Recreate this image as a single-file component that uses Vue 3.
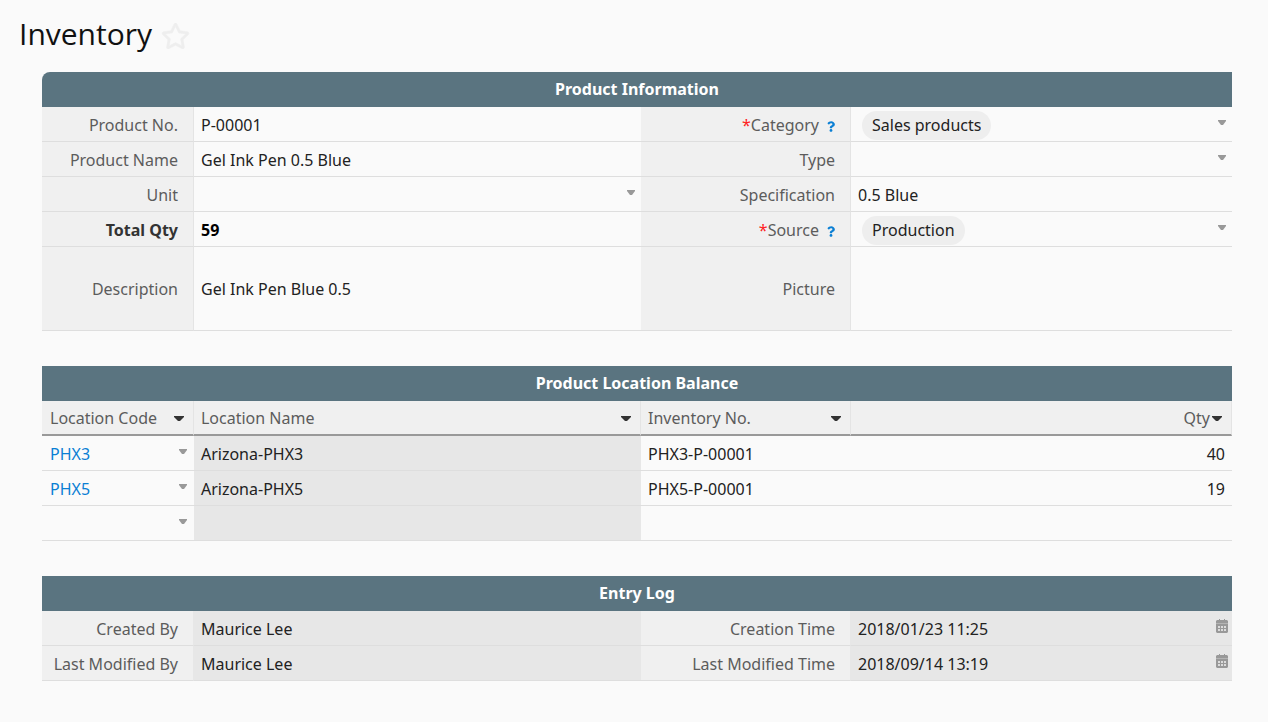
<script setup>
import { reactive } from 'vue'

const record = reactive({
  no: 'P-00001',
  name: 'Gel Ink Pen 0.5 Blue',
  unit: '',
  total: '59',
  description: 'Gel Ink Pen Blue 0.5',
  category: 'Sales products',
  type: '',
  specification: '0.5 Blue',
  source: 'Production',
})

const fields = [
  { key: 'no', label: 'Product No.', kind: 'text' },
  { key: 'category', label: 'Category', kind: 'select', required: true, pill: true },
  { key: 'name', label: 'Product Name', kind: 'text' },
  { key: 'type', label: 'Type', kind: 'select' },
  { key: 'unit', label: 'Unit', kind: 'select' },
  { key: 'specification', label: 'Specification', kind: 'text' },
  { key: 'total', label: 'Total Qty', kind: 'text', strong: true },
  { key: 'source', label: 'Source', kind: 'select', required: true, pill: true },
  { key: 'description', label: 'Description', kind: 'text', tall: true },
  { key: 'picture', label: 'Picture', kind: 'picture', tall: true },
]

const columns = ['Location Code', 'Location Name', 'Inventory No.', 'Qty']
const balances = [
  { code: 'PHX3', name: 'Arizona-PHX3', inventory: 'PHX3-P-00001', qty: 40 },
  { code: 'PHX5', name: 'Arizona-PHX5', inventory: 'PHX5-P-00001', qty: 19 },
  { code: '', name: '', inventory: '', qty: '' },
]

const log = [
  { id: 'created-by', label: 'Created By', value: 'Maurice Lee' },
  { id: 'creation-time', label: 'Creation Time', value: '2018/01/23 11:25', date: true },
  { id: 'modified-by', label: 'Last Modified By', value: 'Maurice Lee' },
  { id: 'modified-time', label: 'Last Modified Time', value: '2018/09/14 13:19', date: true },
]
</script>

<template>
  <main class="page">
    <header class="title">
      <h1>Inventory</h1>
      <button class="star" type="button" aria-label="Add to favorites">
        <svg width="29" height="26" viewBox="0 0 576 512" aria-hidden="true"><path fill="currentColor" stroke="currentColor" stroke-width="10" d="M528.1 171.5L382 150.2 316.7 17.8c-11.7-23.6-45.6-23.9-57.4 0L194 150.2 47.9 171.5c-26.2 3.8-36.7 36.1-17.7 54.6l105.7 103-25 145.5c-4.5 26.3 23.2 46 46.4 33.7L288 439.6l130.7 68.7c23.2 12.2 50.9-7.4 46.4-33.7l-25-145.5 105.7-103c19-18.5 8.5-50.8-17.7-54.6zM388.6 312.3l23.7 138.4L288 385.4l-124.3 65.3 23.7-138.4-100.6-98 139-20.2 62.2-126 62.2 126 139 20.2-100.6 98z" /></svg>
      </button>
    </header>

    <section class="block first">
      <h2>Product Information</h2>
      <div class="fields">
        <template v-for="f in fields" :key="f.key">
          <div class="label" :class="{ strong: f.strong, tall: f.tall }">
            <label :for="f.key"><span v-if="f.required" class="req">*</span>{{ f.label }}</label>
            <button v-if="f.required" class="help" type="button" :aria-label="'Help for ' + f.label">
              <svg width="8" height="11" viewBox="0 0 384 512" aria-hidden="true"><path fill="currentColor" d="M202.021 0C122.202 0 70.503 32.703 29.914 91.026c-7.363 10.58-5.093 25.086 5.178 32.874l43.138 32.709c10.373 7.865 25.132 6.026 33.253-4.148 25.049-31.381 43.63-49.449 82.757-49.449 30.764 0 68.816 19.799 68.816 49.631 0 22.552-18.617 34.134-48.993 51.164-35.423 19.86-82.299 44.576-82.299 106.405V320c0 13.255 10.745 24 24 24h72.471c13.255 0 24-10.745 24-24v-5.773c0-42.86 125.268-44.645 125.268-160.627C377.504 66.256 286.902 0 202.021 0zM192 373.459c-38.196 0-69.271 31.075-69.271 69.271 0 38.195 31.075 69.27 69.271 69.27s69.271-31.075 69.271-69.271-31.075-69.27-69.271-69.27z" /></svg>
            </button>
          </div>
          <div class="value" :class="{ strong: f.strong, tall: f.tall }">
            <input v-if="f.kind === 'text'" :id="f.key" v-model="record[f.key]" type="text" />
            <template v-else-if="f.kind === 'select'">
              <select :id="f.key" v-model="record[f.key]" :class="{ pill: f.pill }">
                <option :value="record[f.key]">{{ record[f.key] }}</option>
              </select>
              <svg class="caret" width="8" height="5" viewBox="0 0 8 5" aria-hidden="true"><path d="M0 0h8v1L5 5H3L0 1z" /></svg>
            </template>
            <input v-else :id="f.key" class="file" type="file" accept="image/*" />
          </div>
        </template>
      </div>
    </section>

    <section class="block">
      <h2>Product Location Balance</h2>
      <table>
        <colgroup>
          <col class="c1" /><col class="c2" /><col class="c3" /><col class="c4" />
        </colgroup>
        <thead>
          <tr>
            <th v-for="c in columns" :key="c" scope="col">
              <div class="head">
                <span>{{ c }}</span>
                <button class="sort" type="button" :aria-label="'Options for ' + c">
                  <svg width="10" height="5" viewBox="0 0 10 5" aria-hidden="true"><path fill="currentColor" d="M0 0h10v1L6 5H4L0 1z" /></svg>
                </button>
              </div>
            </th>
          </tr>
        </thead>
        <tbody>
          <tr v-for="(b, i) in balances" :key="i">
            <td>
              <div class="code">
                <a v-if="b.code" href="#">{{ b.code }}</a>
                <button class="open" type="button" :aria-label="'Choose location, row ' + (i + 1)">
                  <svg class="caret" width="8" height="5" viewBox="0 0 8 5" aria-hidden="true"><path d="M0 0h8v1L5 5H3L0 1z" /></svg>
                </button>
              </div>
            </td>
            <td class="locked">{{ b.name }}</td>
            <td>{{ b.inventory }}</td>
            <td class="number">{{ b.qty }}</td>
          </tr>
        </tbody>
      </table>
    </section>

    <section class="block">
      <h2>Entry Log</h2>
      <div class="fields log">
        <template v-for="l in log" :key="l.id">
          <div class="label"><label :for="l.id">{{ l.label }}</label></div>
          <div class="value locked">
            <input :id="l.id" type="text" :value="l.value" readonly />
            <svg v-if="l.date" class="calendar" width="12" height="14" viewBox="0 0 12 14" aria-hidden="true">
              <path fill="#999" d="M3 0h1v1h4V0h1v1h2l1 1v11l-1 1H1l-1-1V2l1-1h2z" />
              <path fill="#b4b4b4" d="M0 4h12v1H0z" />
              <path fill="#dcdcdc" d="M2 7h2v2H2zM5 7h2v2H5zM8 7h2v2H8zM2 10h2v2H2zM5 10h2v2H5zM8 10h2v2H8z" />
            </svg>
          </div>
        </template>
      </div>
    </section>
  </main>
</template>

<style>
body {
  margin: 0;
  background: #fafafa;
}
</style>

<style scoped>
.page {
  padding: 0 36px 41px 42px;
  font-family: "Noto Sans", "Open Sans", sans-serif;
  font-size: 16px;
  line-height: 24px;
  color: #222;
}
.page * {
  box-sizing: border-box;
}
button,
input,
select {
  font: inherit;
  color: inherit;
  margin: 0;
  padding: 0;
  border: 0;
  background: none;
}
button {
  display: flex;
  cursor: pointer;
}
.title {
  display: flex;
  align-items: center;
  gap: 9px;
  height: 72px;
  margin-left: -23px;
}
h1 {
  margin: 0;
  font-family: "Open Sans", "Noto Sans", sans-serif;
  font-size: 30px;
  line-height: 68px;
  font-weight: 400;
  color: #111;
  align-self: flex-start;
}
.star {
  color: #eee;
}
.block {
  margin-bottom: 35px;
}
.block:last-child {
  margin-bottom: 0;
}
h2 {
  margin: 0;
  background: #5a7480;
  color: #fff;
  font-size: 16px;
  line-height: 35px;
  font-weight: 700;
  text-align: center;
}
.first h2 {
  border-top-left-radius: 8px;
}
.fields {
  display: grid;
  grid-template-columns: minmax(0, 152fr) minmax(0, 447fr) minmax(0, 210fr) minmax(0, 381fr);
}
.label {
  display: flex;
  align-items: center;
  justify-content: flex-end;
  gap: 8px;
  min-height: 35px;
  padding: 2px 15px 0 0;
  background: #f0f0f0;
  border-right: 1px solid #e4e4e4;
  border-bottom: 1px solid #dedede;
  color: #5c5c5c;
  white-space: nowrap;
}
.log .label {
  border-right-color: #e7e7e7;
}
.req {
  color: #f22;
}
.help {
  color: #0a7fd4;
  padding-top: 3px;
}
.value {
  display: flex;
  align-items: center;
  padding: 2px 6px 0 7px;
  border-bottom: 1px solid #dedede;
}
.tall {
  min-height: 84px;
  padding-top: 0;
}
.value input {
  flex: 1;
  min-width: 0;
  height: 24px;
  outline: 0;
}
.value .file {
  opacity: 0;
}
.strong {
  font-weight: 700;
  color: #000;
}
.label.strong {
  color: #333;
}
select {
  appearance: none;
  flex: 1;
  min-width: 0;
  height: 24px;
}
select.pill {
  flex: none;
  field-sizing: content;
  height: 29px;
  margin-left: 4px;
  padding: 0 10px;
  border-radius: 15px;
  background: #eee;
}
.caret {
  flex: none;
  margin: 0 0 6px auto;
  fill: #999;
}
.locked {
  background: #e7e7e7;
}
.calendar {
  margin: 0 -2px 6px 0;
}
table {
  width: 100%;
  table-layout: fixed;
  border-collapse: separate;
  border-spacing: 0;
}
.c1 {
  width: 12.77%;
}
.c2 {
  width: 37.57%;
}
.c3 {
  width: 17.65%;
}
th {
  height: 35px;
  padding: 0 9px 0 7px;
  background: #f0f0f0;
  border-right: 1px solid #e4e4e4;
  border-bottom: 2px solid #999;
  color: #5c5c5c;
  font-weight: 400;
  text-align: left;
}
th:first-child,
td:first-child {
  padding-left: 8px;
}
.head {
  display: flex;
  align-items: center;
  justify-content: space-between;
}
th:last-child .head {
  justify-content: flex-end;
  gap: 2px;
}
.sort {
  color: #333;
  padding-top: 1px;
}
td {
  height: 35px;
  padding: 2px 7px 0;
  border-bottom: 1px solid #dedede;
}
.code {
  display: flex;
  align-items: center;
}
.code a {
  color: #0a7fd4;
  text-decoration: none;
}
.open {
  margin-left: auto;
}
.number {
  text-align: right;
}
</style>
